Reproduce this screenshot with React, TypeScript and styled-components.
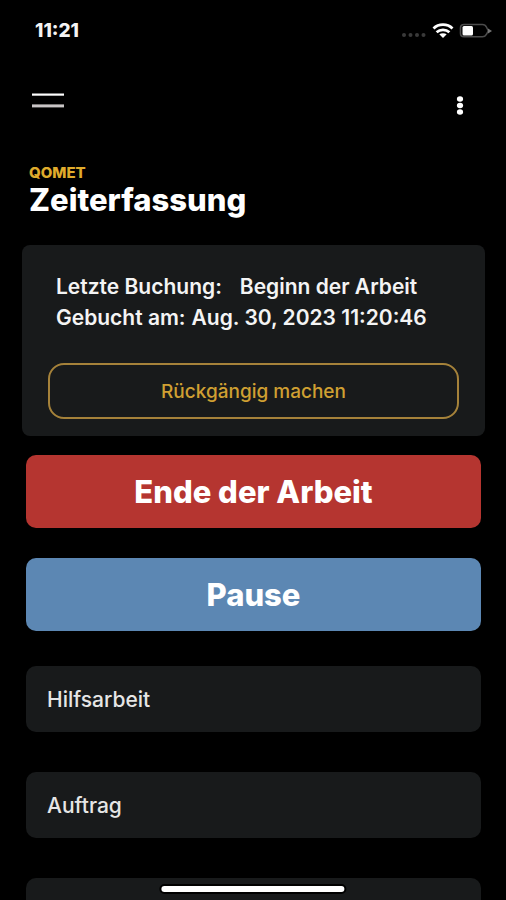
import React, { FC } from 'react';
import styled, { createGlobalStyle } from 'styled-components';

const GlobalStyle = createGlobalStyle`
  * {
    box-sizing: border-box;
  }

  body {
    margin: 0;
    background: #000;
    color: #f4f4f4;
    font-family: Inter, 'Liberation Sans', sans-serif;
  }

  button {
    font-family: inherit;
    cursor: pointer;
  }
`;

const Screen = styled.div`
  display: flex;
  flex-direction: column;
  height: 100vh;
  overflow: hidden;
`;

const StatusBar = styled.div`
  display: flex;
  flex: 0 0 auto;
  align-items: center;
  justify-content: space-between;
  height: 62px;
  padding: 0 14px 0 35px;
`;

const Clock = styled.time`
  font-size: 19px;
  font-weight: 800;
  line-height: 24px;
`;

const Toolbar = styled.header`
  display: flex;
  flex: 0 0 auto;
  align-items: center;
  justify-content: space-between;
  height: 86px;
  padding: 0 28px;
`;

const IconButton = styled.button`
  display: flex;
  padding: 4px;
  border: 0;
  background: none;
  color: #fff;
`;

const Heading = styled.div`
  flex: 0 0 auto;
  padding: 17px 29px 0;
`;

const Brand = styled.p`
  margin: 0;
  color: #e0ac2c;
  font-size: 15px;
  font-weight: 800;
  line-height: 16px;
`;

const Title = styled.h1`
  margin: 0;
  color: #fff;
  font-size: 31px;
  font-weight: 800;
  line-height: 38px;
`;

const Content = styled.main`
  display: flex;
  flex: 1 1 auto;
  flex-direction: column;
  padding: 26px 21px 0 22px;
`;

const Card = styled.section`
  flex: 0 0 auto;
  padding: 26px 26px 17px;
  border-radius: 8px;
  background: #181a1b;
`;

const Booking = styled.dl`
  margin: 0 0 30px;
  padding: 0 8px;
  font-size: 21px;
  font-weight: 600;
  line-height: 31px;
`;

const BookingRow = styled.div<{ $gap: number }>`
  display: flex;
  gap: ${({ $gap }) => $gap}px;
  white-space: nowrap;

  dd {
    margin: 0;
  }
`;

const UndoButton = styled.button`
  display: block;
  width: 100%;
  height: 56px;
  border: 2px solid #a5823a;
  border-radius: 16px;
  background: none;
  color: #d0a032;
  font-size: 19px;
  font-weight: 500;
`;

const Actions = styled.div`
  display: flex;
  flex: 0 0 auto;
  flex-direction: column;
  gap: 30px;
  padding: 19px 4px 0;
`;

const ActionButton = styled.button<{ $color: string }>`
  height: 73px;
  border: 0;
  border-radius: 10px;
  background: ${({ $color }) => $color};
  color: #fff;
  font-size: 31px;
  font-weight: 800;
`;

const Activities = styled.div`
  display: flex;
  flex: 0 0 auto;
  flex-direction: column;
  gap: 40px;
  padding: 35px 4px 0;
`;

const ActivityButton = styled.button`
  height: 66px;
  padding: 0 21px;
  border: 0;
  border-radius: 10px;
  background: #181a1b;
  color: #e6e6e6;
  font-size: 21px;
  font-weight: 500;
  text-align: left;
`;

const HomeIndicator = styled.div`
  position: fixed;
  bottom: 6px;
  left: 50%;
  width: 37%;
  height: 10px;
  border: 2px solid #000;
  border-radius: 5px;
  background: #fff;
  transform: translateX(-50%);
`;

const StatusIcons: FC = () => (
  <svg width="92" height="20" viewBox="0 0 92 20" aria-hidden="true">
    <g fill="#3a3a3a">
      <circle cx="4" cy="14" r="2" />
      <circle cx="10.5" cy="14" r="2" />
      <circle cx="17" cy="14" r="2" />
      <circle cx="23.5" cy="14" r="2" />
    </g>
    <g fill="none" stroke="#fff" strokeWidth="2.8">
      <path d="M33.5 7.4C38.6 2.4 47.4 2.4 52.5 7.4" />
      <path d="M36.6 11.2C40.1 8 45.9 8 49.4 11.2" />
    </g>
    <path d="M39.3 13.3C41.3 11.8 44.7 11.8 46.7 13.3L43 17Z" fill="#fff" />
    <path
      d="M64 3.5H82.5Q85.2 3.5 86.4 6L88.4 10L86.4 13.4Q85.2 15.7 82.5 15.7H64Q60.5 15.7 60.5 12.2V7Q60.5 3.5 64 3.5Z"
      fill="none"
      stroke="#4c4c4c"
      strokeWidth="1.6"
    />
    <path d="M88 7.5L92 10L88 12.5Z" fill="#777" />
    <rect x="62.5" y="5" width="10.5" height="9.5" rx="1.5" fill="#fff" />
  </svg>
);

const activities = [
  { id: 'hilfsarbeit', label: 'Hilfsarbeit' },
  { id: 'auftrag', label: 'Auftrag' },
  { id: 'weitere', label: '' },
];

const App: FC = () => (
  <>
    <GlobalStyle />
    <Screen>
      <StatusBar>
        <Clock>11:21</Clock>
        <StatusIcons />
      </StatusBar>
      <Toolbar>
        <IconButton type="button" aria-label="Menü">
          <svg width="32" height="24" viewBox="0 0 32 24">
            <rect y="0.5" width="32" height="2.2" fill="#fff" />
            <rect y="11.4" width="32" height="3" fill="#c9c5c6" />
          </svg>
        </IconButton>
        <IconButton type="button" aria-label="Optionen">
          <svg width="28" height="24" viewBox="0 0 28 24" fill="currentColor">
            <ellipse cx="14" cy="6" rx="3.1" ry="2.7" />
            <ellipse cx="14" cy="12.5" rx="3.1" ry="2.7" />
            <ellipse cx="14" cy="19" rx="3.1" ry="2.7" />
          </svg>
        </IconButton>
      </Toolbar>
      <Heading>
        <Brand>QOMET</Brand>
        <Title>Zeiterfassung</Title>
      </Heading>
      <Content>
        <Card>
          <Booking>
            <BookingRow $gap={18}>
              <dt>Letzte Buchung:</dt>
              <dd>Beginn der Arbeit</dd>
            </BookingRow>
            <BookingRow $gap={6}>
              <dt>Gebucht am:</dt>
              <dd>Aug. 30, 2023 11:20:46</dd>
            </BookingRow>
          </Booking>
          <UndoButton type="button">Rückgängig machen</UndoButton>
        </Card>
        <Actions>
          <ActionButton type="button" $color="#b53530">
            Ende der Arbeit
          </ActionButton>
          <ActionButton type="button" $color="#5c87b3">
            Pause
          </ActionButton>
        </Actions>
        <Activities>
          {activities.map(({ id, label }) => (
            <ActivityButton
              key={id}
              type="button"
              aria-label={label || 'Weitere Tätigkeit'}
            >
              {label}
            </ActivityButton>
          ))}
        </Activities>
      </Content>
      <HomeIndicator />
    </Screen>
  </>
);

export default App;
